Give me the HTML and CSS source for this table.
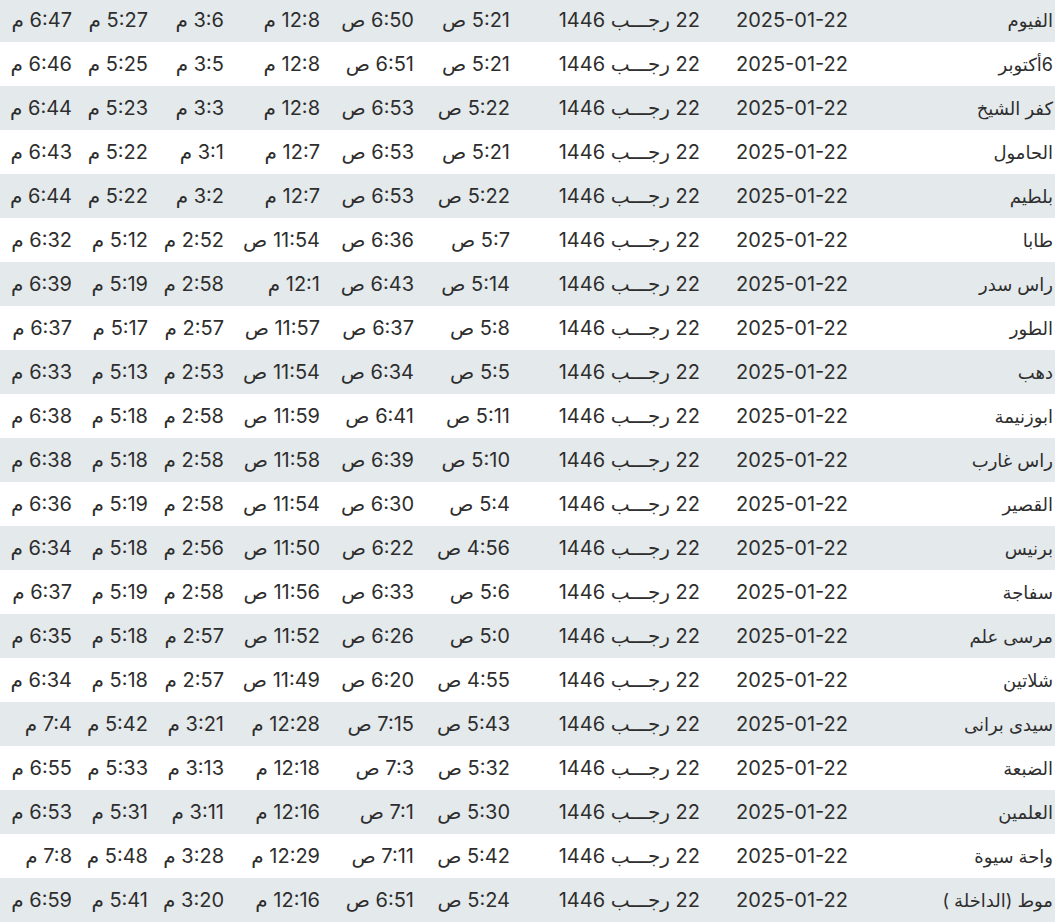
FILE: index.html
```html
<!DOCTYPE html>
<html lang="ar" dir="rtl">
<head>
    <meta charset="UTF-8">
    <meta name="viewport" content="width=device-width, initial-scale=1.0">
    <title>مواقيت الصلاة</title>
    <link rel="stylesheet" href="styles.css">
</head>
<body>
    <table class="prayer-table">
        <colgroup>
            <col class="col-city">
            <col class="col-date">
            <col class="col-hijri">
            <col class="col-time">
            <col class="col-time2">
            <col class="col-time">
            <col class="col-short">
            <col class="col-short">
            <col class="col-last">
        </colgroup>
        <tbody>
            <tr><td>الفيوم</td><td>2025-01-22</td><td>22 رجـــب 1446</td><td>5:21 ص</td><td>6:50 ص</td><td>12:8 م</td><td>3:6 م</td><td>5:27 م</td><td>6:47 م</td></tr>
            <tr><td>6أكتوبر</td><td>2025-01-22</td><td>22 رجـــب 1446</td><td>5:21 ص</td><td>6:51 ص</td><td>12:8 م</td><td>3:5 م</td><td>5:25 م</td><td>6:46 م</td></tr>
            <tr><td>كفر الشيخ</td><td>2025-01-22</td><td>22 رجـــب 1446</td><td>5:22 ص</td><td>6:53 ص</td><td>12:8 م</td><td>3:3 م</td><td>5:23 م</td><td>6:44 م</td></tr>
            <tr><td>الحامول</td><td>2025-01-22</td><td>22 رجـــب 1446</td><td>5:21 ص</td><td>6:53 ص</td><td>12:7 م</td><td>3:1 م</td><td>5:22 م</td><td>6:43 م</td></tr>
            <tr><td>بلطيم</td><td>2025-01-22</td><td>22 رجـــب 1446</td><td>5:22 ص</td><td>6:53 ص</td><td>12:7 م</td><td>3:2 م</td><td>5:22 م</td><td>6:44 م</td></tr>
            <tr><td>طابا</td><td>2025-01-22</td><td>22 رجـــب 1446</td><td>5:7 ص</td><td>6:36 ص</td><td>11:54 ص</td><td>2:52 م</td><td>5:12 م</td><td>6:32 م</td></tr>
            <tr><td>راس سدر</td><td>2025-01-22</td><td>22 رجـــب 1446</td><td>5:14 ص</td><td>6:43 ص</td><td>12:1 م</td><td>2:58 م</td><td>5:19 م</td><td>6:39 م</td></tr>
            <tr><td>الطور</td><td>2025-01-22</td><td>22 رجـــب 1446</td><td>5:8 ص</td><td>6:37 ص</td><td>11:57 ص</td><td>2:57 م</td><td>5:17 م</td><td>6:37 م</td></tr>
            <tr><td>دهب</td><td>2025-01-22</td><td>22 رجـــب 1446</td><td>5:5 ص</td><td>6:34 ص</td><td>11:54 ص</td><td>2:53 م</td><td>5:13 م</td><td>6:33 م</td></tr>
            <tr><td>ابوزنيمة</td><td>2025-01-22</td><td>22 رجـــب 1446</td><td>5:11 ص</td><td>6:41 ص</td><td>11:59 ص</td><td>2:58 م</td><td>5:18 م</td><td>6:38 م</td></tr>
            <tr><td>راس غارب</td><td>2025-01-22</td><td>22 رجـــب 1446</td><td>5:10 ص</td><td>6:39 ص</td><td>11:58 ص</td><td>2:58 م</td><td>5:18 م</td><td>6:38 م</td></tr>
            <tr><td>القصير</td><td>2025-01-22</td><td>22 رجـــب 1446</td><td>5:4 ص</td><td>6:30 ص</td><td>11:54 ص</td><td>2:58 م</td><td>5:19 م</td><td>6:36 م</td></tr>
            <tr><td>برنيس</td><td>2025-01-22</td><td>22 رجـــب 1446</td><td>4:56 ص</td><td>6:22 ص</td><td>11:50 ص</td><td>2:56 م</td><td>5:18 م</td><td>6:34 م</td></tr>
            <tr><td>سفاجة</td><td>2025-01-22</td><td>22 رجـــب 1446</td><td>5:6 ص</td><td>6:33 ص</td><td>11:56 ص</td><td>2:58 م</td><td>5:19 م</td><td>6:37 م</td></tr>
            <tr><td>مرسى علم</td><td>2025-01-22</td><td>22 رجـــب 1446</td><td>5:0 ص</td><td>6:26 ص</td><td>11:52 ص</td><td>2:57 م</td><td>5:18 م</td><td>6:35 م</td></tr>
            <tr><td>شلاتين</td><td>2025-01-22</td><td>22 رجـــب 1446</td><td>4:55 ص</td><td>6:20 ص</td><td>11:49 ص</td><td>2:57 م</td><td>5:18 م</td><td>6:34 م</td></tr>
            <tr><td>سيدى برانى</td><td>2025-01-22</td><td>22 رجـــب 1446</td><td>5:43 ص</td><td>7:15 ص</td><td>12:28 م</td><td>3:21 م</td><td>5:42 م</td><td>7:4 م</td></tr>
            <tr><td>الضبعة</td><td>2025-01-22</td><td>22 رجـــب 1446</td><td>5:32 ص</td><td>7:3 ص</td><td>12:18 م</td><td>3:13 م</td><td>5:33 م</td><td>6:55 م</td></tr>
            <tr><td>العلمين</td><td>2025-01-22</td><td>22 رجـــب 1446</td><td>5:30 ص</td><td>7:1 ص</td><td>12:16 م</td><td>3:11 م</td><td>5:31 م</td><td>6:53 م</td></tr>
            <tr><td>واحة سيوة</td><td>2025-01-22</td><td>22 رجـــب 1446</td><td>5:42 ص</td><td>7:11 ص</td><td>12:29 م</td><td>3:28 م</td><td>5:48 م</td><td>7:8 م</td></tr>
            <tr><td>موط (الداخلة )</td><td>2025-01-22</td><td>22 رجـــب 1446</td><td>5:24 ص</td><td>6:51 ص</td><td>12:16 م</td><td>3:20 م</td><td>5:41 م</td><td>6:59 م</td></tr>
        </tbody>
    </table>
</body>
</html>
```

FILE: styles.css
```css
body {
    margin: 0;
    padding: 0;
    background: #fff;
    font-family: Inter, "DejaVu Sans", sans-serif;
    color: #2e2e2e;
}

.prayer-table {
    width: 100%;
    margin-top: -2px;
    border-collapse: collapse;
    table-layout: fixed;
    font-size: 20px;
}

.col-city { width: 205px; }
.col-date { width: 148px; }
.col-hijri { width: 190px; }
.col-time { width: 96px; }
.col-time2 { width: 94px; }
.col-short { width: 76px; }
.col-last { width: 74px; }

.prayer-table td {
    height: 44px;
    padding: 0 2px 0 0;
    text-align: right;
    white-space: nowrap;
    box-sizing: border-box;
}

.prayer-table td:first-child {
    font-size: 18px;
}

.prayer-table tr:nth-child(odd) {
    background: #e4e9ec;
}
```
